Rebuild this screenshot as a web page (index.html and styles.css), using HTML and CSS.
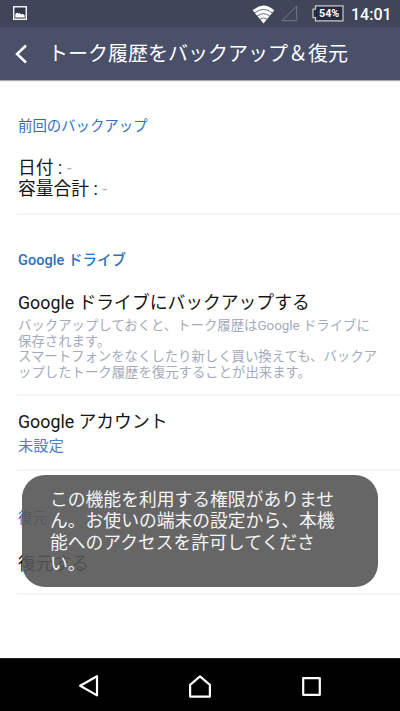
FILE: index.html
```html
<!DOCTYPE html>
<html lang="ja">
<head>
<meta charset="utf-8">
<title>トーク履歴をバックアップ＆復元</title>
<link rel="stylesheet" href="styles.css">
</head>
<body>
<div class="screen">
  <div class="status">
    <svg class="photo" width="14" height="14" viewBox="0 0 14 14"><rect x=".75" y=".75" width="12.5" height="12.5" fill="#30364d" stroke="#eee" stroke-width="1.5"/><path d="M2.3 11.5V8.2L4 6.5l1.3 1.3L6.5 6.8 8 8.5l1.5-.8 2.2 1.5v2.3z" fill="#fff"/></svg>
    <svg class="wifi" width="23" height="19" viewBox="0 0 23 19"><path d="M.7 5.3Q11.5-4.3 22.3 5.3L11.5 18.5z" fill="#fff"/><path d="M2.5 8.1q9-7.4 18 0M5 11.3q6.5-5.2 13 0M7.5 14.4q4-3 8 0" fill="none" stroke="#404559" stroke-width=".8"/></svg>
    <svg class="signal" width="17" height="17" viewBox="0 0 17 17"><path d="M1 15.7h14.7V1z" fill="none" stroke="#73788a" stroke-width="1"/></svg>
    <div class="battery">
      <svg width="32" height="17" viewBox="0 0 32 17"><path d="M3.5 .9h27.5v15H3.5v-3.3H1V4.2h2.5z" fill="#252b40" stroke="#ccc" stroke-width="1.2"/></svg>
      <span>54%</span>
    </div>
    <span class="clock">14:01</span>
  </div>
  <header class="appbar">
    <svg width="13" height="20" viewBox="0 0 13 20"><path d="M11 1.5 2 10l9 8.5" fill="none" stroke="#fff" stroke-width="2.5"/></svg>
    <h1>トーク履歴をバックアップ＆復元</h1>
  </header>
  <main>
    <section class="last">
      <h2>前回のバックアップ</h2>
      <p class="item info">日付 : <i>-</i><br>容量合計 : <i>-</i></p>
    </section>
    <section class="drive">
      <h2 class="latin">Google ドライブ</h2>
      <p class="item">Google ドライブにバックアップする</p>
      <p class="desc">バックアップしておくと、トーク履歴はGoogle ドライブに<br>保存されます。<br>スマートフォンをなくしたり新しく買い換えても、バックア<br>ップしたトーク履歴を復元することが出来ます。</p>
    </section>
    <section class="account">
      <p class="item">Google アカウント</p>
      <p class="value">未設定</p>
    </section>
    <section class="restore">
      <h2>復元</h2>
      <p class="item">復元する</p>
    </section>
  </main>
  <nav>
    <svg width="20" height="22" viewBox="0 0 20 22"><path d="M18 1.2v19.2L1.2 10.8z"/></svg>
    <svg width="22" height="23" viewBox="0 0 22 23"><path d="M1.1 21.6V9.8L11 1.3l9.9 8.5v11.8z"/></svg>
    <svg width="19" height="19" viewBox="0 0 19 19"><path d="M1.2 1.2h16.6v16.6H1.2z"/></svg>
  </nav>
  <div class="toast">この機能を利用する権限がありませ<br>ん。お使いの端末の設定から、本機<br>能へのアクセスを許可してくださ<br>い。</div>
</div>
</body>
</html>
```
FILE: styles.css
```css
* { box-sizing: border-box; margin: 0; padding: 0; }
body { background: #fff; font-family: Roboto, "Noto Sans CJK JP", sans-serif; }
svg { display: block; flex: none; }
.screen { position: relative; width: 400px; height: 711px; display: flex; flex-direction: column; overflow: hidden; white-space: nowrap; }
.status { height: 27px; background: #404559; display: flex; align-items: flex-start; padding: 0 9px 0 13px; color: #fff; }
.photo { margin-top: 6px; }
.wifi { margin: 5px 0 0 225px; }
.signal { margin: 5px 0 0 6px; }
.battery { position: relative; margin: 5px 0 0 14px; width: 32px; }
.battery span { position: absolute; left: 7px; top: 0; font-size: 10.7px; line-height: 17px; font-weight: 700; }
.clock { margin-left: 7px; font-size: 16px; line-height: 29px; font-weight: 500; }
.appbar { height: 53px; background: #4a5069; display: flex; align-items: center; padding: 1px 0 0 15px; color: #fff; box-shadow: 0 1px 1px #aaa; }
.appbar h1 { font-size: 20px; line-height: 30px; font-weight: 400; margin-left: 20px; }
main { flex: 1; padding-left: 17px; }
section { border-bottom: 2px solid #f6f6f7; padding-left: 1px; }
h2 { font-size: 14.4px; line-height: 20px; font-weight: 400; font-family: "Noto Sans CJK JP", sans-serif; color: #2f6fbe; }
h2.latin { font-family: Roboto, "Noto Sans CJK JP", sans-serif; font-weight: 500; font-size: 14.5px; letter-spacing: .05px; }
.item { font-size: 17.8px; line-height: 21px; font-weight: 400; color: #151515; }
.item i { color: #b0b5c0; font-style: normal; }
.last { height: 135px; padding-top: 35px; }
.info { margin-top: 22px; }
.drive { height: 181px; padding-top: 36px; }
.drive .item { margin-top: 21px; }
.desc { font-size: 13.38px; line-height: 15.5px; color: #a5abba; margin-top: 5px; }
.account { height: 75px; padding-top: 15px; }
.value { font-size: 15.3px; line-height: 20px; color: #4c7fc5; margin-top: 4px; }
.restore { height: 124px; padding-top: 36px; }
.restore .item { margin-top: 26px; }
nav { height: 53px; background: #000; border-top: 1px solid #222; display: flex; align-items: center; padding: 2px 79px 0 79px; justify-content: space-between; }
nav svg:nth-child(2) { margin-right: 1px; }
nav path { fill: none; stroke: #fff; stroke-width: 2.2; stroke-linejoin: round; }
.toast { position: absolute; left: 22px; top: 475px; width: 356px; height: 112px; border-radius: 23px; background: rgba(85,85,85,.9); color: #f5f5f5; font-size: 17.8px; line-height: 21.3px; padding: 14px 0 0 28px; }
```
